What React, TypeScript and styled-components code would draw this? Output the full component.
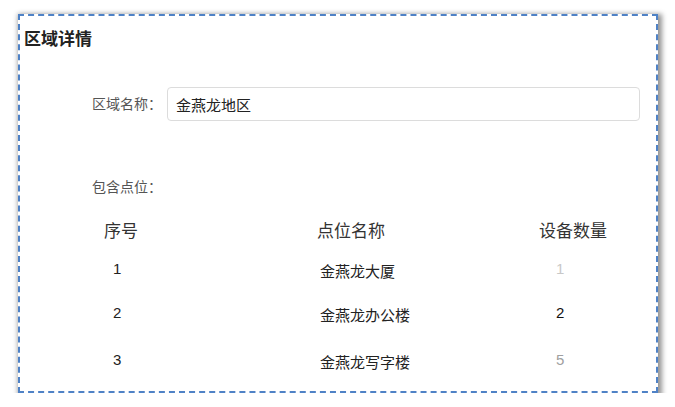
import styled, { createGlobalStyle } from "styled-components";

const GlobalStyle = createGlobalStyle`
  html, body {
    margin: 0;
    padding: 0;
    background: #fff;
    font-family: "Liberation Sans", "Noto Sans CJK SC", sans-serif;
    color: #333;
  }
  * {
    box-sizing: border-box;
  }
`;

const Card = styled.div`
  margin: 14px 0 0 18px;
  width: 640px;
  height: 379px;
  border: 2px dashed #4f82c6;
  background: #fff;
  box-shadow: 2px 2px 5px 2px rgba(0, 0, 0, 0.42);
  padding: 12px 16px 0 4px;
  display: flex;
  flex-direction: column;
`;

const Title = styled.h2`
  margin: 0;
  font-size: 17px;
  line-height: 24px;
  font-weight: 600;
  color: #222;
`;

const FormRow = styled.div`
  margin: 35px 0 0 68px;
  display: flex;
  align-items: center;
`;

const Label = styled.label`
  width: 75px;
  font-size: 14px;
  line-height: 20px;
  color: #555;
  white-space: nowrap;
`;

const Input = styled.input`
  flex: 1;
  height: 34px;
  border: 1px solid #dcdcdc;
  border-radius: 4px;
  padding: 0 8px;
  font-family: inherit;
  font-size: 15px;
  color: #222;
  outline: none;
`;

const SectionLabel = styled.div`
  margin: 56px 0 0 68px;
  font-size: 14px;
  line-height: 20px;
  color: #555;
`;

const Table = styled.div`
  margin: 23px 0 0 80px;
  display: flex;
  flex-direction: column;
`;

const Row = styled.div<{ $top?: number }>`
  display: grid;
  grid-template-columns: 213px 222px auto;
  align-items: start;
  margin-top: ${(p) => p.$top ?? 0}px;
`;

const HeadCell = styled.div`
  font-size: 17px;
  line-height: 24px;
  color: #333;
`;

const Cell = styled.div<{ $indent: number; $shift?: number; $tone?: string }>`
  padding-left: ${(p) => p.$indent}px;
  font-size: 15px;
  line-height: 20px;
  color: ${(p) => p.$tone ?? "#222"};
  transform: translateY(${(p) => p.$shift ?? 0}px);
`;

const points = [
  { no: 1, name: "金燕龙大厦", count: 1, tone: "#c8c8c8", top: 15 },
  { no: 2, name: "金燕龙办公楼", count: 2, tone: "#111", top: 24 },
  { no: 3, name: "金燕龙写字楼", count: 5, tone: "#a0a0a0", top: 27 },
];

const App = () => {
  return (
    <>
      <GlobalStyle />
      <Card>
        <Title>区域详情</Title>
        <FormRow>
          <Label>区域名称：</Label>
          <Input value="金燕龙地区" readOnly />
        </FormRow>
        <SectionLabel>包含点位：</SectionLabel>
        <Table>
          <Row>
            <HeadCell>序号</HeadCell>
            <HeadCell>点位名称</HeadCell>
            <HeadCell>设备数量</HeadCell>
          </Row>
          {points.map((p) => (
            <Row key={p.no} $top={p.top}>
              <Cell $indent={9}>{p.no}</Cell>
              <Cell $indent={3} $shift={3}>
                {p.name}
              </Cell>
              <Cell $indent={17} $tone={p.tone}>
                {p.count}
              </Cell>
            </Row>
          ))}
        </Table>
      </Card>
    </>
  );
};

export default App;
